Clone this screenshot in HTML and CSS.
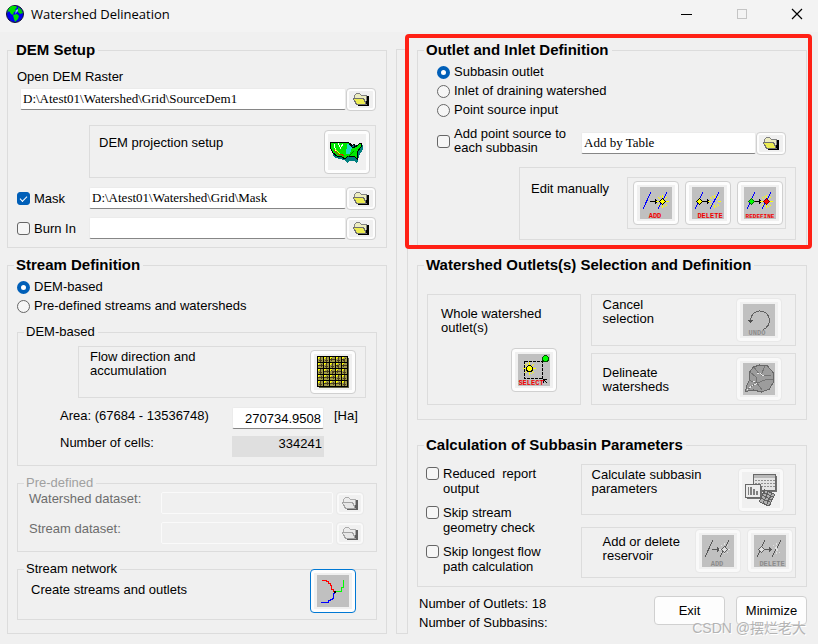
FILE: index.html
```html
<!DOCTYPE html>
<html lang="en">
<head>
  <meta charset="UTF-8">
  <meta name="viewport" content="width=device-width, initial-scale=1.0">
  <title>Watershed Delineation</title>
  <link rel="stylesheet" href="styles.css">
</head>
<body>
  <!-- shared icons -->
  <svg class="sprite" width="0" height="0" aria-hidden="true">
    <defs>
      <symbol id="folder" viewBox="0 0 18 13">
        <path d="M15 3h2v10H6v-1h9z" fill="#000"/>
        <path d="M2 2h1v-1h1v-1h4v1h1v1h6v10H5V9H2z" fill="#808080"/>
        <path d="M3 2h1V1h4v1h1v1h5v6h-1V7h-1V5H3z" fill="#ececc0"/>
        <path d="M1 5h11v1h1v2h1v2h1v2H4v-1H3V9H2V7H1z" fill="#707070"/>
        <path d="M2 6h9v1h1v2h1v2H5v-1H4V8H3V7H2z" fill="#ecec50"/>
        <path d="M14 8h1v3h-1z" fill="#000"/>
      </symbol>
      <symbol id="burst" viewBox="0 0 13 13">
        <path d="M6 0h1v3H6zM6 10h1v3H6zM0 6h3v1H0zM10 6h3v1h-3zM2 2h1v1H2zM3 3h1v1H3zM10 2h1v1h-1zM9 3h1v1H9zM2 10h1v1H2zM3 9h1v1H3zM10 10h1v1h-1zM9 9h1v1H9zM4 1h1v1H4zM8 11h1v1H8z" fill="#ffff00"/>
      </symbol>
      <symbol id="lines" viewBox="0 0 32 32">
        <rect width="32" height="32" fill="#c0c0c0"/>
        <path d="M3 22L11 5M18 22L27 5" stroke="#0000ff" fill="none"/>
        <path d="M10 14h5v-2h1v1h1v1h1v1h-1v1h-1v1h-1v-2h-5z" fill="#000"/>
      </symbol>
      <symbol id="down" viewBox="0 0 5 5">
        <path d="M2 0h1v5H2zM1 3h3v1H1z" fill="#4c4020"/>
      </symbol>
      <pattern id="cells" width="6" height="6" x="1" y="1" patternUnits="userSpaceOnUse">
        <path d="M0 0h6v6H0z" fill="#a09a48"/>
        <path d="M0 0h2v1H1v1H0z" fill="#ffff00"/>
        <path d="M5 0h1v6H0V5h5z" fill="#000"/>
      </pattern>
    </defs>
  </svg>

  <header class="titlebar">
    <svg class="globe" width="18" height="18" viewBox="0 0 18 18">
      <circle cx="9" cy="9" r="8.500" fill="#0000f0" stroke="#101030"/>
      <path d="M3 3l3-2h4l1 2-2 1 1 2-2 1-1 3-2-1-2-3-2 2z" fill="#00e000"/>
      <path d="M7 10l4-1 2 2-1 3-3 3-1-3z" fill="#00e000"/>
      <path d="M12 2l3 2 2 4-3 1-2-2z" fill="#00c800"/>
      <path d="M10 5l2-1v2l-3 3z" fill="#80b0ff"/>
    </svg>
    <h1>Watershed Delineation</h1>
    <div class="window-controls">
      <button type="button" aria-label="Minimize window"><svg width="12" height="12" viewBox="0 0 12 12"><path d="M0 6.500h11" stroke="#000"/></svg></button>
      <button type="button" aria-label="Maximize window" disabled><svg width="12" height="12" viewBox="0 0 12 12"><rect x="1.500" y="1.500" width="9" height="9" fill="none" stroke="#c4c4c4"/></svg></button>
      <button type="button" aria-label="Close window"><svg width="12" height="12" viewBox="0 0 12 12"><path d="M1 1l10 10M11 1L1 11" stroke="#000" stroke-width="1.200"/></svg></button>
    </div>
  </header>

  <main class="dialog">
    <div class="column">
      <fieldset class="group">
        <legend>DEM Setup</legend>
        <div class="dem-setup">
          <label for="dem">Open DEM Raster</label>
          <div class="file-row dem-row">
            <input class="field" type="text" id="dem" value="D:\Atest01\Watershed\Grid\SourceDem1">
            <button type="button" class="icon-btn small" aria-label="Browse DEM raster"><svg width="18" height="13"><use href="#folder"/></svg></button>
          </div>
          <div class="panel projection">
            <span>DEM projection setup</span>
            <button type="button" class="icon-btn" aria-label="DEM projection setup">
              <svg width="34" height="22" viewBox="0 0 34 22">
                <path d="M2 4L1 9l2 6 5 2 5 1 3 3 3-2h5l2 3 1-3 1-5 4-7V3z" fill="#008080" transform="translate(1 1)"/>
                <path d="M1 1l5 1 8-1 5 1 3 4 3 0 2-1 3-3 2 0-1 4-3 4-1 4v4l-3-3h-4l-3 1-2 2-4-3-4 0-4-3-3-6z" fill="#00e800" stroke="#000"/>
                <path d="M17 3l3 1 2 3-2 6-4 0z" fill="#20d8c8"/>
                <path d="M4 3l2 7M8 2l3 6M13 3l-3 5" stroke="#fff" fill="none"/>
                <path d="M4 9l4 4 3 0 3 2" stroke="#e02000" fill="none"/>
                <path d="M5 8l5 5" stroke="#ffff00" fill="none"/>
                <path d="M20 2l2 3 2-2 1 3 3-2" stroke="#000" fill="none"/>
                <path d="M18 16l6-6" stroke="#008000" fill="none"/>
              </svg>
            </button>
          </div>
          <div class="file-row mask-row">
            <label class="option"><input type="checkbox" checked> Mask</label>
            <input class="field" type="text" aria-label="Mask path" value="D:\Atest01\Watershed\Grid\Mask">
            <button type="button" class="icon-btn small" aria-label="Browse mask"><svg width="18" height="13"><use href="#folder"/></svg></button>
          </div>
          <div class="file-row burn-row">
            <label class="option"><input type="checkbox"> Burn In</label>
            <input class="field" type="text" aria-label="Burn in path">
            <button type="button" class="icon-btn small" aria-label="Browse burn in"><svg width="18" height="13"><use href="#folder"/></svg></button>
          </div>
        </div>
      </fieldset>

      <fieldset class="group">
        <legend>Stream Definition</legend>
        <div class="stream-definition">
          <div class="options">
            <label class="option"><input type="radio" name="stream" checked> DEM-based</label>
            <label class="option"><input type="radio" name="stream"> Pre-defined streams and watersheds</label>
          </div>

          <fieldset class="group sub">
            <legend>DEM-based</legend>
            <div class="dem-based">
              <div class="panel flow">
                <span>Flow direction and<br>accumulation</span>
                <button type="button" class="icon-btn" aria-label="Flow direction and accumulation">
                  <svg width="32" height="32" viewBox="0 0 32 32">
                    <path d="M2 2h30v30H2z" fill="#606048"/>
                    <path d="M0 0h31v31H0z" fill="#000"/>
                    <path d="M1 1h30v30H1z" fill="url(#cells)"/>
                    <use href="#down" width="5" height="5" transform="translate(1 1)"/>
                    <use href="#down" width="5" height="5" transform="translate(7 1)"/>
                    <use href="#down" width="5" height="5" transform="translate(13 1) rotate(90 2.500 2.500)"/>
                    <use href="#down" width="5" height="5" transform="translate(19 1)"/>
                    <use href="#down" width="5" height="5" transform="translate(25 1) rotate(45 2.500 2.500)"/>
                    <use href="#down" width="5" height="5" transform="translate(1 7) rotate(-90 2.500 2.500)"/>
                    <use href="#down" width="5" height="5" transform="translate(7 7)"/>
                    <use href="#down" width="5" height="5" transform="translate(13 7)"/>
                    <use href="#down" width="5" height="5" transform="translate(19 7) rotate(45 2.500 2.500)"/>
                    <use href="#down" width="5" height="5" transform="translate(25 7) rotate(90 2.500 2.500)"/>
                    <use href="#down" width="5" height="5" transform="translate(1 13)"/>
                    <use href="#down" width="5" height="5" transform="translate(7 13) rotate(-90 2.500 2.500)"/>
                    <use href="#down" width="5" height="5" transform="translate(13 13) rotate(-45 2.500 2.500)"/>
                    <use href="#down" width="5" height="5" transform="translate(19 13) rotate(90 2.500 2.500)"/>
                    <use href="#down" width="5" height="5" transform="translate(25 13)"/>
                    <use href="#down" width="5" height="5" transform="translate(1 19) rotate(-90 2.500 2.500)"/>
                    <use href="#down" width="5" height="5" transform="translate(7 19) rotate(-90 2.500 2.500)"/>
                    <use href="#down" width="5" height="5" transform="translate(13 19) rotate(-90 2.500 2.500)"/>
                    <use href="#down" width="5" height="5" transform="translate(19 19)"/>
                    <use href="#down" width="5" height="5" transform="translate(25 19)"/>
                    <use href="#down" width="5" height="5" transform="translate(1 25)"/>
                    <use href="#down" width="5" height="5" transform="translate(7 25) rotate(-90 2.500 2.500)"/>
                    <use href="#down" width="5" height="5" transform="translate(13 25) rotate(-90 2.500 2.500)"/>
                    <use href="#down" width="5" height="5" transform="translate(19 25) rotate(-90 2.500 2.500)"/>
                    <use href="#down" width="5" height="5" transform="translate(25 25)"/>
                  </svg>
                </button>
              </div>
              <div class="value-row">
                <label for="area">Area: (67684 - 13536748)</label>
                <input class="field number" type="text" id="area" value="270734.9508">
                <span>[Ha]</span>
              </div>
              <div class="value-row cells-row">
                <label for="cells-count">Number of cells:</label>
                <output class="cell-count" id="cells-count">334241</output>
              </div>
            </div>
          </fieldset>

          <fieldset class="group sub" disabled>
            <legend>Pre-defined</legend>
            <div class="predefined">
              <div class="dataset-row">
                <label for="ws-data">Watershed dataset:</label>
                <input class="field" type="text" id="ws-data">
                <button type="button" class="icon-btn small" aria-label="Browse watershed dataset"><svg width="18" height="13"><use href="#folder"/></svg></button>
              </div>
              <div class="dataset-row">
                <label for="st-data">Stream dataset:</label>
                <input class="field" type="text" id="st-data">
                <button type="button" class="icon-btn small" aria-label="Browse stream dataset"><svg width="18" height="13"><use href="#folder"/></svg></button>
              </div>
            </div>
          </fieldset>

          <fieldset class="group sub">
            <legend>Stream network</legend>
            <div class="network">
              <span>Create streams and outlets</span>
              <button type="button" class="icon-btn default" aria-label="Create streams and outlets">
                <svg width="32" height="32" viewBox="0 0 32 32">
                  <rect width="32" height="32" fill="#c0c0c0"/>
                  <g fill="none">
                    <path d="M5 5.500h4.500v1h2v2h2v2h1v4h2v2" stroke="#ff0000"/>
                    <path d="M26.500 5v7.500h-2v4H19" stroke="#00ff00"/>
                    <path d="M18 18.500h-1.500v5h-1v1h-2v1h-2v2H4" stroke="#0000ff"/>
                  </g>
                  <path d="M17 16h2v2h-2z" fill="#000"/>
                </svg>
              </button>
            </div>
          </fieldset>
        </div>
      </fieldset>
    </div>

    <div class="divider"></div>

    <div class="column">
      <fieldset class="group highlighted">
        <legend>Outlet and Inlet Definition</legend>
        <div class="outlet-definition">
          <div class="options">
            <label class="option"><input type="radio" name="outlet" checked> Subbasin outlet</label>
            <label class="option"><input type="radio" name="outlet"> Inlet of draining watershed</label>
            <label class="option"><input type="radio" name="outlet"> Point source input</label>
          </div>
          <div class="file-row point-row">
            <label class="option"><input type="checkbox"> <span>Add point source to<br>each subbasin</span></label>
            <input class="field" type="text" aria-label="Point source table" value="Add by Table">
            <button type="button" class="icon-btn small" aria-label="Browse table"><svg width="18" height="13"><use href="#folder"/></svg></button>
          </div>
          <div class="panel edit">
            <span>Edit manually</span>
            <div class="panel tools">
              <button type="button" class="icon-btn">
                <svg width="32" height="32" viewBox="0 0 32 32">
                  <use href="#lines"/>
                  <use href="#burst" x="16" y="8" width="13" height="13"/>
                  <path d="M22.500 11.500l3 3-3 3-3-3z" fill="#ffff00" stroke="#000"/>
                  <text class="icon-text" x="15" y="31">ADD</text>
                </svg>
              </button>
              <button type="button" class="icon-btn">
                <svg width="32" height="32" viewBox="0 0 32 32">
                  <use href="#lines"/>
                  <use href="#burst" x="16" y="8" width="13" height="13"/>
                  <path d="M7.500 11.500l3 3-3 3-3-3z" fill="#ffff00" stroke="#000"/>
                  <text class="icon-text" x="18" y="31">DELETE</text>
                </svg>
              </button>
              <button type="button" class="icon-btn">
                <svg width="32" height="32" viewBox="0 0 32 32">
                  <use href="#lines"/>
                  <use href="#burst" x="16" y="8" width="13" height="13"/>
                  <path d="M7.500 11.500l3 3-3 3-3-3z" fill="#00ff00" stroke="#006000"/>
                  <path d="M22.500 11.500l3 3-3 3-3-3z" fill="#ff0000" stroke="#800000"/>
                  <text class="icon-text long" x="16" y="31">REDEFINE</text>
                </svg>
              </button>
            </div>
          </div>
        </div>
      </fieldset>

      <fieldset class="group">
        <legend>Watershed Outlets(s) Selection and Definition</legend>
        <div class="selection">
          <div class="panel whole">
            <span>Whole watershed<br>outlet(s)</span>
            <button type="button" class="icon-btn">
              <svg width="32" height="32" viewBox="0 0 32 32">
                <rect width="32" height="32" fill="#c0c0c0"/>
                <rect x="6.500" y="7.500" width="18" height="17" fill="none" stroke="#000" stroke-dasharray="3 1"/>
                <use href="#burst" x="5" y="8" width="13" height="13"/>
                <circle cx="11.500" cy="14.500" r="3" fill="#ffff00" stroke="#000"/>
                <circle cx="27.500" cy="4.500" r="3" fill="#00ff00" stroke="#005000"/>
                <path d="M25 25h4v1h-2v1h1v1h1v1h-1v-1h-1v-1h-1v2h-1z" fill="#000"/>
                <text class="icon-text" x="13" y="31">SELECT</text>
              </svg>
            </button>
          </div>
          <div class="panel action top">
            <span>Cancel<br>selection</span>
            <button type="button" class="icon-btn" disabled>
              <svg width="32" height="32" viewBox="0 0 32 32">
                <rect width="32" height="32" fill="#c0c0c0"/>
                <path d="M7.500 16A9.500 9.500 0 1 1 20 25.500" fill="none" stroke="#606060"/>
                <path d="M5 16h5v1H9v1H8v1H7v-1H6v-1H5z" fill="#505050"/>
                <text class="icon-text" x="14" y="31">UNDO</text>
              </svg>
            </button>
          </div>
          <div class="panel action">
            <span>Delineate<br>watersheds</span>
            <button type="button" class="icon-btn" disabled aria-label="Delineate watersheds">
              <svg width="32" height="32" viewBox="0 0 32 32">
                <rect width="32" height="32" fill="#c0c0c0"/>
                <path d="M2.500 28.500l1-5 3-7V9l4-5 6-2 8 1 6 7v9l-4 7-8 3-8-2z" fill="#9c9c9c" stroke="#686868"/>
                <path d="M7 9l6 5 1 6M11 4l5 7M22 3l-4 9 10 1M14 20l8-3 8-1M14 20l5 7M6 17l7 3M5 26l7-5" fill="none" stroke="#747474"/>
                <path d="M4 27l6-5 4-1M14 10l4 1 4 3M10 18l5 3" fill="none" stroke="#e8e8e8" stroke-dasharray="2 1"/>
              </svg>
            </button>
          </div>
        </div>
      </fieldset>

      <fieldset class="group parameters">
        <legend>Calculation of Subbasin Parameters</legend>
        <div class="calculation">
          <div class="checks">
            <label class="option"><input type="checkbox"> <span>Reduced&nbsp; report<br>output</span></label>
            <label class="option"><input type="checkbox"> <span>Skip stream<br>geometry check</span></label>
            <label class="option"><input type="checkbox"> <span>Skip longest flow<br>path calculation</span></label>
          </div>
          <div class="panels">
            <div class="panel calc">
              <span>Calculate subbasin<br>parameters</span>
              <button type="button" class="icon-btn" disabled aria-label="Calculate subbasin parameters">
                <svg width="32" height="32" viewBox="0 0 32 32">
                  <path d="M10 2h22v16H10z" fill="#707070"/>
                  <path d="M8.500 0.500h22v16h-22z" fill="#e4e4e4" stroke="#686868"/>
                  <path d="M9 1h21v3H9z" fill="#b8b8b8"/>
                  <path d="M10 6.500h20M10 9.500h20M10 12.500h20" stroke="#909090" stroke-dasharray="2 1"/>
                  <path d="M2 12h15v13H2z" fill="#707070"/>
                  <path d="M0.500 10.500h15v13h-15z" fill="#ececec" stroke="#686868"/>
                  <path d="M3 13h1v8H3zM5 13h2v8H5zM8 15h2v6H8zM11 17h2v4h-2z" fill="#808080"/>
                  <g transform="rotate(25 22 24)">
                    <rect x="16.500" y="17.500" width="11" height="13" fill="#b0b0b0" stroke="#606060"/>
                    <path d="M17 20.500h10M17 23.500h10M17 26.500h10M20.500 18v12M24.500 18v12" stroke="#606060"/>
                  </g>
                </svg>
              </button>
            </div>
            <div class="panel reservoir">
              <span>Add or delete<br>reservoir</span>
              <div class="pair">
                <button type="button" class="icon-btn" disabled>
                  <svg width="32" height="32" viewBox="0 0 32 32">
                    <rect width="32" height="32" fill="#c0c0c0"/>
                    <path d="M3 22L11 5M18 22L27 5" stroke="#585858"/>
                    <path d="M10 14h5v-2h1v1h1v1h1v1h-1v1h-1v1h-1v-2h-5z" fill="#585858"/>
                    <path d="M22.500 8v12M17 14.500h11M19 10l7 8M26 10l-7 8" stroke="#e0e0e0" stroke-dasharray="2 1"/>
                    <path d="M22.500 11.500l3 3-3 3-3-3z" fill="#e0e0e0" stroke="#606060"/>
                    <text class="icon-text" x="15" y="31">ADD</text>
                  </svg>
                </button>
                <button type="button" class="icon-btn" disabled>
                  <svg width="32" height="32" viewBox="0 0 32 32">
                    <rect width="32" height="32" fill="#c0c0c0"/>
                    <path d="M3 22L11 5M18 22L27 5" stroke="#585858"/>
                    <path d="M10 14h5v-2h1v1h1v1h1v1h-1v1h-1v1h-1v-2h-5z" fill="#585858"/>
                    <path d="M22.500 8v12M19 10l7 8" stroke="#e0e0e0" stroke-dasharray="2 1"/>
                    <path d="M7.500 11.500l3 3-3 3-3-3z" fill="#e0e0e0" stroke="#606060"/>
                    <text class="icon-text" x="18" y="31">DELETE</text>
                  </svg>
                </button>
              </div>
            </div>
          </div>
        </div>
      </fieldset>

      <div class="footer">
        <div class="counts">
          <p>Number of Outlets: 18</p>
          <p>Number of Subbasins:</p>
        </div>
        <button type="button" class="btn">Exit</button>
        <button type="button" class="btn">Minimize</button>
      </div>
    </div>
  </main>

  <div class="watermark">CSDN @摆烂老大</div>
</body>
</html>
```

FILE: styles.css
```css
* {
  box-sizing: border-box;
}

body {
  position: relative;
  min-height: 100vh;
  margin: 0;
  background: #f0f0f0;
  color: #000;
  font-family: "Liberation Sans", Arial, sans-serif;
  font-size: 13px;
  line-height: 14px;
}

.sprite {
  position: absolute;
}

/* title bar */
.titlebar {
  display: flex;
  align-items: center;
  height: 32px;
  padding-left: 6px;
  background: #f3f3f3;
}

.globe {
  margin-bottom: 4px;
}

.titlebar h1 {
  flex: 1;
  margin: 0 0 4px 7px;
  font-family: "Open Sans", "Noto Sans", sans-serif;
  font-size: 13px;
  font-weight: normal;
  line-height: 20px;
}

.window-controls {
  display: flex;
  gap: 13px;
  padding-bottom: 4px;
}

.window-controls button {
  display: flex;
  align-items: center;
  justify-content: center;
  width: 42px;
  height: 28px;
  padding: 0;
  border: none;
  background: none;
}

/* layout */
.dialog {
  display: grid;
  grid-template-columns: 380fr 12px 390fr;
  gap: 9px;
  padding: 10px 11px 10px 7px;
}

.column {
  display: flex;
  flex-direction: column;
  gap: 9px;
  min-width: 0;
}

.divider {
  margin-top: 7px;
  border: 1px solid #dcdcdc;
}

.group {
  min-width: 0;
  margin: 0;
  padding: 0;
  border: 1px solid #dcdcdc;
}

.group legend {
  margin-left: 6px;
  padding: 0 3px 0 2px;
  font-size: 15px;
  font-weight: bold;
  line-height: 16px;
}

.group.sub legend {
  font-size: 13px;
  font-weight: normal;
}

.panel {
  display: flex;
  align-items: flex-start;
  justify-content: space-between;
  border: 1px solid #dcdcdc;
}

/* controls */
.field {
  width: 100%;
  min-width: 0;
  height: 22px;
  padding: 0 2px;
  border: 1px solid #ebebeb;
  border-bottom-color: #868686;
  border-radius: 2px;
  background: #fff;
  color: #000;
  font-family: "Liberation Serif", "Times New Roman", serif;
  font-size: 13px;
}

.field.number {
  font-family: "Liberation Sans", Arial, sans-serif;
  text-align: right;
}

.field:disabled {
  border-color: #fafafa;
  background: #f0f0f0;
}

.icon-btn {
  display: flex;
  flex: none;
  align-items: center;
  justify-content: center;
  width: 46px;
  height: 44px;
  padding: 0;
  border: 1px solid #d0d0d0;
  border-radius: 4px;
  background: #f0f0f0;
  box-shadow: inset 0 0 0 3px #fdfdfd;
}

.icon-btn svg {
  shape-rendering: crispEdges;
}

.icon-btn.small {
  width: 30px;
  height: 23px;
  box-shadow: inset 0 0 0 2px #fdfdfd;
}

.icon-btn.default {
  border-color: #0078d4;
}

.icon-btn:disabled {
  border-color: #e9e9e9;
  box-shadow: inset 0 0 0 3px #f9f9f9;
}

.icon-btn.small:disabled {
  box-shadow: inset 0 0 0 2px #f9f9f9;
}

.icon-btn.small:disabled svg {
  filter: grayscale(1);
  opacity: 0.6;
}

.icon-text {
  fill: #f00000;
  font-family: "Liberation Mono", monospace;
  font-size: 7px;
  font-weight: bold;
  text-anchor: middle;
}

.icon-text.long {
  font-size: 6px;
}

.icon-btn:disabled .icon-text {
  fill: #8c8c8c;
}

.option {
  display: flex;
  align-items: center;
  gap: 4px;
}

.option input {
  flex: none;
  width: 13px;
  height: 13px;
  margin: 0;
  appearance: none;
  border: 1px solid #666;
  background: #f6f6f6;
}

.option input[type="checkbox"] {
  border-radius: 3px;
}

.option input[type="radio"] {
  border-radius: 50%;
}

.option input[type="radio"]:checked {
  border: 4px solid #005fb8;
  background: #fff;
}

.option input[type="checkbox"]:checked {
  display: flex;
  align-items: center;
  justify-content: center;
  border-color: #005fb8;
  background: #005fb8;
}

.option input[type="checkbox"]:checked::after {
  content: "";
  width: 6px;
  height: 3px;
  margin-bottom: 2px;
  border-bottom: 1px solid #fff;
  border-left: 1px solid #fff;
  transform: rotate(-45deg);
}

.options {
  display: flex;
  flex-direction: column;
  gap: 5px;
  padding-top: 7px;
}

.file-row {
  display: grid;
  grid-template-columns: 72px 1fr 30px;
  align-items: start;
}

.file-row .option {
  height: 23px;
}

/* DEM setup */
.dem-setup {
  display: flex;
  flex-direction: column;
  padding: 12px 10px 7px 9px;
}

.dem-row {
  grid-template-columns: 1fr 30px;
  margin: 4px 0 14px 3px;
}

.projection {
  height: 53px;
  margin: 0 0 9px 72px;
  padding: 4px 5px 4px 9px;
}

.projection span {
  padding-top: 6px;
}

.burn-row {
  margin-top: 7px;
}

/* stream definition */
.stream-definition {
  display: flex;
  flex-direction: column;
  gap: 9px;
  padding: 0 9px 13px;
}

.stream-definition .options {
  margin-bottom: 2px;
}

.dem-based {
  display: flex;
  flex-direction: column;
  padding: 6px 10px 8px 42px;
}

.flow {
  height: 52px;
  margin: 0 0 9px 18px;
  padding: 3px 9px 3px 11px;
}

.value-row {
  display: grid;
  grid-template-columns: 1fr 92px 32px;
  column-gap: 10px;
  align-items: start;
  height: 22px;
}

.value-row label,
.value-row span {
  padding-top: 2px;
}

.cells-row {
  height: 21px;
  margin-top: 7px;
}

.cells-row label {
  padding-top: 0;
}

.cell-count {
  height: 21px;
  padding: 1px 2px;
  background: #dfdfdf;
  text-align: right;
}

.group:disabled legend {
  color: #a0a0a0;
}

.predefined {
  display: flex;
  flex-direction: column;
  gap: 7px;
  padding: 1px 12px 6px 11px;
  color: #6d6d6d;
}

.dataset-row {
  display: grid;
  grid-template-columns: 132px 1fr 28px;
}

.dataset-row .field {
  width: calc(100% - 3px);
}

.dataset-row .icon-btn {
  width: 28px;
}

.network {
  display: flex;
  justify-content: space-between;
  padding: 0 20px 6px 13px;
}

.network span {
  padding-top: 6px;
}

.network .icon-btn {
  margin-top: -8px;
}

/* outlet and inlet definition */
.highlighted {
  position: relative;
}

.highlighted::after {
  content: "";
  position: absolute;
  top: -24px;
  right: -6px;
  bottom: -2px;
  left: -13px;
  border: 4px solid #ff2015;
  border-radius: 4px;
  pointer-events: none;
}

.outlet-definition {
  display: flex;
  flex-direction: column;
  padding: 0 10px 7px 19px;
}

.point-row {
  grid-template-columns: 144px 1fr 30px;
  align-items: end;
  margin: 10px 10px 12px 0;
}

.point-row .option {
  height: 28px;
}

.point-row .field {
  align-self: center;
  margin-top: 4px;
}

.edit {
  height: 73px;
  margin-left: 82px;
  padding: 9px 9px 9px 11px;
}

.edit span {
  padding-top: 5px;
}

.tools {
  gap: 6px;
  height: 52px;
  padding: 3px 2px 3px 5px;
}

/* outlet selection */
.selection {
  display: grid;
  grid-template-columns: 154fr 206fr;
  grid-template-rows: 52px 52px;
  gap: 7px 10px;
  padding: 21px 10px 14px 9px;
}

.whole {
  flex-direction: column;
  grid-row: span 2;
  padding: 12px 13px;
}

.whole .icon-btn {
  align-self: flex-end;
  margin-right: 10px;
}

.action {
  padding: 3px 13px 3px 11px;
}

.action span {
  padding-top: 9px;
}

.action.top span {
  padding-top: 0;
}

/* subbasin parameters */
.parameters {
  margin-top: 8px;
}

.calculation {
  display: grid;
  grid-template-columns: 155fr 216fr;
  padding: 11px 10px 8px 8px;
}

.checks {
  display: flex;
  flex-direction: column;
  gap: 9px;
  padding-top: 2px;
  line-height: 15px;
}

.checks .option {
  align-items: flex-start;
}

.checks .option input {
  margin-top: 1px;
}

.panels {
  display: flex;
  flex-direction: column;
  gap: 12px;
}

.calc {
  height: 51px;
  padding: 3px 11px 3px 10px;
}

.reservoir {
  height: 51px;
  padding: 1px 2px 1px 21px;
}

.reservoir span {
  padding-top: 6px;
}

.pair {
  display: flex;
  gap: 6px;
}

/* footer */
.footer {
  display: flex;
  gap: 11px;
}

.counts {
  display: flex;
  flex: 1;
  flex-direction: column;
  gap: 5px;
  padding: 1px 0 0 2px;
}

.counts p {
  margin: 0;
}

.btn {
  width: 71px;
  height: 29px;
  padding: 0;
  border: 1px solid #d0d0d0;
  border-radius: 4px;
  background: #fdfdfd;
  color: #000;
  font-family: "Liberation Sans", Arial, sans-serif;
  font-size: 13px;
}

.watermark {
  position: absolute;
  right: 12px;
  bottom: 6px;
  color: #b4b4b4;
  font-family: "Liberation Sans", "Noto Sans CJK SC", sans-serif;
  font-size: 14px;
  line-height: 20px;
  text-shadow: 1px 1px 0 #fff;
  pointer-events: none;
}
```
